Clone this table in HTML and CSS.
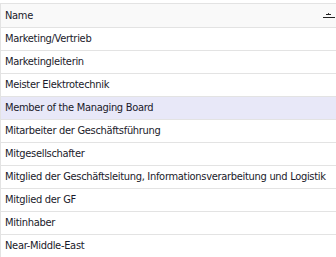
FILE: index.html
```html
<!DOCTYPE html>
<html>
<head>
<meta charset="utf-8">
<link rel="stylesheet" href="styles.css">
</head>
<body>
<div class="grid">
  <div class="head">
    <span class="head-label">Name</span>
    <svg class="sort" width="12" height="6" viewBox="0 0 12 6">
      <rect x="5" y="0" width="1" height="1" fill="#444"/>
      <rect x="3" y="1" width="5" height="1" fill="#222"/>
      <rect x="0" y="4" width="12" height="1" fill="#222"/>
    </svg>
  </div>
  <div class="row">Marketing/Vertrieb</div>
  <div class="row">Marketingleiterin</div>
  <div class="row">Meister Elektrotechnik</div>
  <div class="row selected">Member of the Managing Board</div>
  <div class="row">Mitarbeiter der Geschäftsführung</div>
  <div class="row">Mitgesellschafter</div>
  <div class="row">Mitglied der Geschäftsleitung, Informationsverarbeitung und Logistik</div>
  <div class="row">Mitglied der GF</div>
  <div class="row">Mitinhaber</div>
  <div class="row">Near-Middle-East</div>
</div>
</body>
</html>
```
FILE: styles.css
```css
html, body {
  margin: 0;
  padding: 0;
  background: #ffffff;
  overflow: hidden;
}
body {
  padding-top: 3px;
  font-family: "DejaVu Sans Condensed", "DejaVu Sans", sans-serif;
  font-size: 11px;
  letter-spacing: -0.3px;
  color: #1a1a2a;
}
.grid {
  border-top: 1px solid #e3e3e3;
  border-left: 1px solid #e3e3e3;
}
.head {
  height: 23px;
  background: #f9f9f9;
  border-bottom: 1px solid #e3e3e3;
  display: flex;
  align-items: center;
  justify-content: space-between;
  padding: 0 1px 0 4px;
}
.sort {
  display: block;
  margin-top: 1px;
}
.row {
  height: 22px;
  line-height: 22px;
  border-bottom: 1px solid #e3e3e3;
  padding-left: 4px;
  white-space: nowrap;
}
.selected {
  background: #e8e8f8;
}
```
